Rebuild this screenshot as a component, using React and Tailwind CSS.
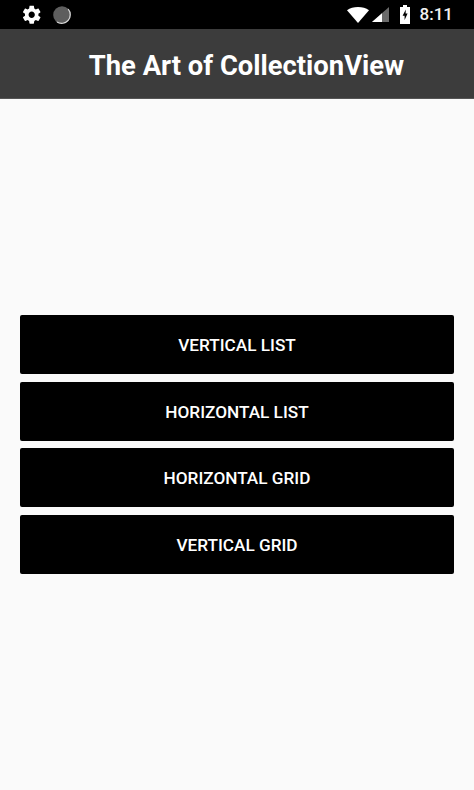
const buttons = ['VERTICAL LIST', 'HORIZONTAL LIST', 'HORIZONTAL GRID', 'VERTICAL GRID'];

function StatusBar() {
  return (
    <div className="h-[29px] bg-black flex items-center pl-[21px] pr-[21px] shrink-0">
      <svg viewBox="0 0 24 24" className="w-[21.5px] h-[21.5px] fill-white mr-[10px]">
        <path d="M19.4 13c.04-.32.07-.65.07-1s-.03-.68-.07-1l2.1-1.65c.2-.15.25-.42.12-.64l-2-3.46c-.12-.22-.38-.3-.6-.22l-2.5 1c-.52-.4-1.08-.73-1.7-.98l-.38-2.65C14.4 2.18 14.2 2 13.95 2h-4c-.25 0-.45.18-.49.42L9.08 5.07c-.6.25-1.17.59-1.69.98l-2.49-1c-.23-.09-.49 0-.61.22l-2 3.46c-.13.22-.07.49.12.64L4.51 11c-.04.32-.07.66-.07 1s.03.68.07 1l-2.1 1.65c-.2.15-.25.42-.12.64l2 3.46c.12.22.38.3.61.22l2.49-1c.52.4 1.08.73 1.69.98l.38 2.65c.04.24.24.42.49.42h4c.25 0 .45-.18.49-.42l.38-2.65c.61-.25 1.17-.59 1.7-.98l2.49 1c.23.09.49 0 .61-.22l2-3.46c.12-.22.07-.49-.12-.64L19.4 13zM11.95 15.5c-1.93 0-3.5-1.57-3.5-3.5s1.57-3.5 3.5-3.5 3.5 1.57 3.5 3.5-1.57 3.5-3.5 3.5z" />
      </svg>
      <svg viewBox="0 0 18 18" className="w-[18px] h-[18px]">
        <circle cx="9" cy="9" r="8.8" fill="#5e5e5e" />
        <path d="M15.2 3.2A8.6 8.6 0 0 1 4 16" fill="none" stroke="#d8d8d8" strokeWidth="1.2" />
      </svg>
      <div className="flex-1" />
      <svg viewBox="0 0 22 16" className="w-[22px] h-[16px] fill-white mr-[3px]">
        <path d="M11 16L0 3.2C3 1 6.8 0 11 0s8 1 11 3.2z" />
      </svg>
      <svg viewBox="0 0 17 15" className="w-[17px] h-[15px] mr-[11px]">
        <path d="M17 0v15H0z" fill="#6a6a6a" />
        <path d="M10 6.2V15H0z" fill="#fff" />
      </svg>
      <svg viewBox="0 0 10 19" className="w-[10px] h-[19px] mr-[10px]">
        <path d="M3 0h4v2h3v17H0V2h3z" fill="#fff" />
        <path d="M5.8 4.5L2.6 10.8h2v4.2L7.6 8.6h-2z" fill="#000" />
      </svg>
      <span className="font-['Roboto',sans-serif] text-[17px] font-medium text-[#f2f2f2] leading-none">8:11</span>
    </div>
  );
}

export default function App() {
  return (
    <div className="w-[474px] h-[790px] bg-[#fafafa] flex flex-col font-['Roboto',sans-serif]">
      <StatusBar />
      <div className="h-[70px] bg-[#3c3c3c] border-b border-[#555555] flex items-center justify-center pl-[19px] pt-[7px] shrink-0">
        <h1 className="text-[27.4px] font-bold text-white leading-none">The Art of CollectionView</h1>
      </div>
      <div className="flex-1 flex flex-col gap-[7.67px] px-[20px] pt-[216px]">
        {buttons.map((label) => (
          <button key={label} className="h-[59px] bg-black rounded-[2px] text-white text-[17.2px] font-medium pt-[3px]">
            {label}
          </button>
        ))}
      </div>
    </div>
  );
}
